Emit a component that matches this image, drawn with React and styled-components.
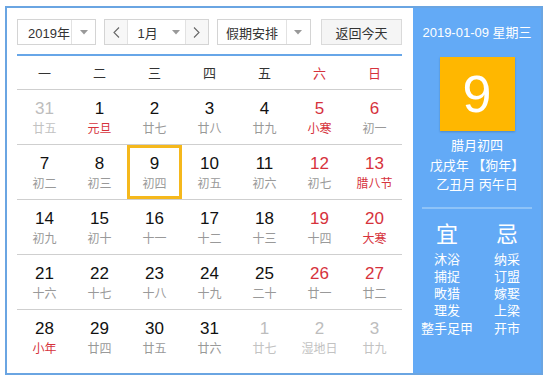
import styled, { createGlobalStyle } from 'styled-components';

const GlobalStyle = createGlobalStyle`
  body {
    margin: 0;
    background: #fff;
    font-family: "Liberation Sans", "Noto Sans CJK SC", sans-serif;
  }
`;

const weekdays = ['一', '二', '三', '四', '五', '六', '日'];

// kind: other = 非本月, red = 周末, fest = 节日
const weeks = [
    [
        { d: 31, l: '廿五', other: true },
        { d: 1, l: '元旦', fest: true },
        { d: 2, l: '廿七' },
        { d: 3, l: '廿八' },
        { d: 4, l: '廿九' },
        { d: 5, l: '小寒', red: true, fest: true },
        { d: 6, l: '初一', red: true },
    ],
    [
        { d: 7, l: '初二' },
        { d: 8, l: '初三' },
        { d: 9, l: '初四', selected: true },
        { d: 10, l: '初五' },
        { d: 11, l: '初六' },
        { d: 12, l: '初七', red: true },
        { d: 13, l: '腊八节', red: true, fest: true },
    ],
    [
        { d: 14, l: '初九' },
        { d: 15, l: '初十' },
        { d: 16, l: '十一' },
        { d: 17, l: '十二' },
        { d: 18, l: '十三' },
        { d: 19, l: '十四', red: true },
        { d: 20, l: '大寒', red: true, fest: true },
    ],
    [
        { d: 21, l: '十六' },
        { d: 22, l: '十七' },
        { d: 23, l: '十八' },
        { d: 24, l: '十九' },
        { d: 25, l: '二十' },
        { d: 26, l: '廿一', red: true },
        { d: 27, l: '廿二', red: true },
    ],
    [
        { d: 28, l: '小年', fest: true },
        { d: 29, l: '廿四' },
        { d: 30, l: '廿五' },
        { d: 31, l: '廿六' },
        { d: 1, l: '廿七', other: true },
        { d: 2, l: '湿地日', other: true },
        { d: 3, l: '廿九', other: true },
    ],
];

const yi = ['沐浴', '捕捉', '畋猎', '理发', '整手足甲'];
const ji = ['纳采', '订盟', '嫁娶', '上梁', '开市'];

const Caret = () => (
    <svg width="8" height="5" viewBox="0 0 8 5">
        <polygon points="0,0 8,0 4,4.5" fill="#999" />
    </svg>
);

const Chevron = ({ dir }) => (
    <svg width="7" height="11" viewBox="0 0 7 11">
        <polyline
            points={dir === 'left' ? '6,0.5 1,5.5 6,10.5' : '1,0.5 6,5.5 1,10.5'}
            fill="none"
            stroke="#666"
            strokeWidth="1.1"
        />
    </svg>
);

export default function App() {
    return (
        <>
            <GlobalStyle />
            <Frame>
                <Main>
                    <Toolbar>
                        <Select width={80}>
                            <SelectText>2019年</SelectText>
                            <CaretBox><Caret /></CaretBox>
                        </Select>
                        <Select width={106}>
                            <ArrowBtn><Chevron dir="left" /></ArrowBtn>
                            <SelectText center>1月</SelectText>
                            <CaretBox small><Caret /></CaretBox>
                            <ArrowBtn right><Chevron dir="right" /></ArrowBtn>
                        </Select>
                        <Select width={95}>
                            <SelectText center>假期安排</SelectText>
                            <CaretBox><Caret /></CaretBox>
                        </Select>
                        <TodayButton>返回今天</TodayButton>
                    </Toolbar>
                    <Grid>
                        {weekdays.map((w, i) => (
                            <HeadCell key={w} red={i >= 5}>{w}</HeadCell>
                        ))}
                        {weeks.map((week, wi) =>
                            week.map((c, ci) => (
                                <DayCell
                                    key={`${wi}-${ci}`}
                                    last={wi === weeks.length - 1}
                                    selected={c.selected}
                                >
                                    <DayNum other={c.other} red={c.red}>{c.d}</DayNum>
                                    <Lunar other={c.other} fest={c.fest}>{c.l}</Lunar>
                                </DayCell>
                            ))
                        )}
                    </Grid>
                </Main>
                <Side>
                    <SideDate>2019-01-09 星期三</SideDate>
                    <BigDay>9</BigDay>
                    <SideInfo>
                        <div>腊月初四</div>
                        <div>戊戌年 【狗年】</div>
                        <div>乙丑月 丙午日</div>
                    </SideInfo>
                    <Divider />
                    <Advice>
                        <AdviceCol>
                            <AdviceTitle>宜</AdviceTitle>
                            {yi.map(t => <AdviceItem key={t}>{t}</AdviceItem>)}
                        </AdviceCol>
                        <AdviceCol>
                            <AdviceTitle>忌</AdviceTitle>
                            {ji.map(t => <AdviceItem key={t}>{t}</AdviceItem>)}
                        </AdviceCol>
                    </Advice>
                </Side>
            </Frame>
        </>
    );
}

const Frame = styled.div`
    margin: 6px 0 0 5px;
    width: 534px;
    height: 365px;
    border: 2px solid #6aa5e2;
    display: flex;
`;

const Main = styled.div`
    width: 385px;
    padding: 11px 11px 0 10px;
    background: #fff;
`;

const Toolbar = styled.div`
    display: flex;
    gap: 8px;
    height: 26px;
    padding-bottom: 9px;
    border-bottom: 2px solid #67a6e8;
`;

const Select = styled.div`
    box-sizing: border-box;
    width: ${p => p.width}px;
    height: 26px;
    border: 1px solid #d4d4d4;
    display: flex;
    align-items: stretch;
    font-size: 13px;
    color: #333;
    background: #fff;
`;

const SelectText = styled.div`
    flex: 1;
    display: flex;
    align-items: center;
    justify-content: ${p => (p.center ? 'center' : 'flex-start')};
    padding-left: ${p => (p.center ? 0 : 10)}px;
`;

const CaretBox = styled.div`
    width: ${p => (p.small ? 18 : 23)}px;
    display: flex;
    align-items: center;
    justify-content: center;
    border-left: ${p => (p.small ? 'none' : '1px solid #e2e2e2')};
`;

const ArrowBtn = styled.div`
    width: 22px;
    display: flex;
    align-items: center;
    justify-content: center;
    background: #f7f7f7;
    ${p => (p.right ? 'border-left: 1px solid #e2e2e2;' : 'border-right: 1px solid #e2e2e2;')}
`;

const TodayButton = styled.div`
    box-sizing: border-box;
    width: 82px;
    height: 26px;
    margin-left: 2px;
    border: 1px solid #dadada;
    background: #f5f5f5;
    font-size: 13px;
    color: #333;
    display: flex;
    align-items: center;
    justify-content: center;
`;

const Grid = styled.div`
    display: grid;
    grid-template-columns: repeat(7, 55px);
`;

const HeadCell = styled.div`
    height: 33px;
    border-bottom: 1px solid #cfcfcf;
    display: flex;
    align-items: center;
    justify-content: center;
    font-size: 13px;
    color: ${p => (p.red ? '#d6323c' : '#333')};
`;

const DayCell = styled.div`
    box-sizing: border-box;
    height: 55px;
    padding-top: 9px;
    border-bottom: ${p => (p.last ? 'none' : '1px solid #cfcfcf')};
    display: flex;
    flex-direction: column;
    align-items: center;
    ${p => p.selected && 'box-shadow: inset 0 0 0 3px #f5b81c;'}
`;

const DayNum = styled.div`
    font-size: 17px;
    line-height: 20px;
    color: ${p => (p.other ? '#bdbdbd' : p.red ? '#d6323c' : '#111')};
`;

const Lunar = styled.div`
    margin-top: 2px;
    font-size: 12px;
    line-height: 16px;
    color: ${p => (p.other ? '#c2c2c2' : p.fest ? '#d6323c' : '#999')};
`;

const Side = styled.div`
    flex: 1;
    background: #63aaf6;
    color: #fff;
    display: flex;
    flex-direction: column;
    align-items: center;
    padding-top: 16px;
`;

const SideDate = styled.div`
    font-size: 13px;
    line-height: 18px;
`;

const BigDay = styled.div`
    margin-top: 15px;
    width: 75px;
    height: 74px;
    background: #ffb700;
    box-shadow: 0 1px 2px rgba(0, 0, 0, 0.2);
    display: flex;
    align-items: center;
    justify-content: center;
    font-size: 52px;
    line-height: 1;
`;

const SideInfo = styled.div`
    margin-top: 5px;
    font-size: 13px;
    line-height: 19.5px;
    text-align: center;
`;

const Divider = styled.div`
    margin-top: 12px;
    width: 110px;
    height: 2px;
    background: #8ec3f8;
`;

const Advice = styled.div`
    margin-top: 12px;
    display: grid;
    grid-template-columns: 58px 58px;
    gap: 2px;
`;

const AdviceCol = styled.div`
    display: flex;
    flex-direction: column;
    align-items: center;
`;

const AdviceTitle = styled.div`
    font-size: 22px;
    line-height: 28px;
    margin-bottom: 2px;
`;

const AdviceItem = styled.div`
    font-size: 13px;
    line-height: 17.3px;
`;
